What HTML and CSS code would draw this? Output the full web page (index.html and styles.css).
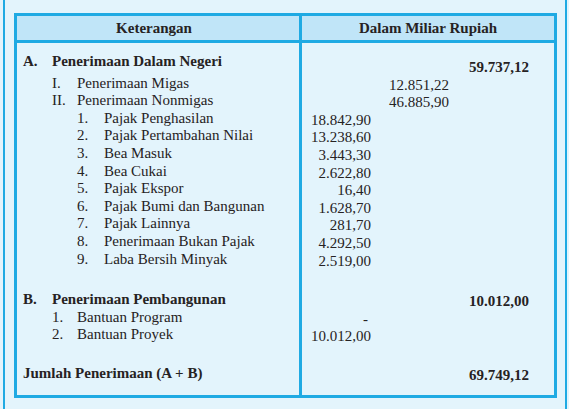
FILE: index.html
```html
<!DOCTYPE html>
<html lang="id">
<head>
<meta charset="utf-8">
<title>Penerimaan Negara</title>
<link rel="stylesheet" href="styles.css">
</head>
<body>
<div class="page">
  <table class="tbl">
    <colgroup>
      <col class="c-label">
      <col class="c-n1">
      <col class="c-n2">
      <col class="c-n3">
      <col class="c-pad">
    </colgroup>
    <thead>
      <tr>
        <th class="h-label">Keterangan</th>
        <th class="h-num" colspan="4">Dalam Miliar Rupiah</th>
      </tr>
    </thead>
    <tbody>
      <tr class="r-first">
        <td class="lab"><div class="item l0 b"><span>A.</span><span>Penerimaan Dalam Negeri</span></div></td>
        <td class="n"></td><td class="n"></td><td class="n b">59.737,12</td><td></td>
      </tr>
      <tr>
        <td class="lab"><div class="item l1"><span>I.</span><span>Penerimaan Migas</span></div></td>
        <td class="n"></td><td class="n">12.851,22</td><td class="n"></td><td></td>
      </tr>
      <tr>
        <td class="lab"><div class="item l1"><span>II.</span><span>Penerimaan Nonmigas</span></div></td>
        <td class="n"></td><td class="n">46.885,90</td><td class="n"></td><td></td>
      </tr>
      <tr>
        <td class="lab"><div class="item l2"><span>1.</span><span>Pajak Penghasilan</span></div></td>
        <td class="n">18.842,90</td><td class="n"></td><td class="n"></td><td></td>
      </tr>
      <tr>
        <td class="lab"><div class="item l2"><span>2.</span><span>Pajak Pertambahan Nilai</span></div></td>
        <td class="n">13.238,60</td><td class="n"></td><td class="n"></td><td></td>
      </tr>
      <tr>
        <td class="lab"><div class="item l2"><span>3.</span><span>Bea Masuk</span></div></td>
        <td class="n">3.443,30</td><td class="n"></td><td class="n"></td><td></td>
      </tr>
      <tr>
        <td class="lab"><div class="item l2"><span>4.</span><span>Bea Cukai</span></div></td>
        <td class="n">2.622,80</td><td class="n"></td><td class="n"></td><td></td>
      </tr>
      <tr>
        <td class="lab"><div class="item l2"><span>5.</span><span>Pajak Ekspor</span></div></td>
        <td class="n">16,40</td><td class="n"></td><td class="n"></td><td></td>
      </tr>
      <tr>
        <td class="lab"><div class="item l2"><span>6.</span><span>Pajak Bumi dan Bangunan</span></div></td>
        <td class="n">1.628,70</td><td class="n"></td><td class="n"></td><td></td>
      </tr>
      <tr>
        <td class="lab"><div class="item l2"><span>7.</span><span>Pajak Lainnya</span></div></td>
        <td class="n">281,70</td><td class="n"></td><td class="n"></td><td></td>
      </tr>
      <tr>
        <td class="lab"><div class="item l2"><span>8.</span><span>Penerimaan Bukan Pajak</span></div></td>
        <td class="n">4.292,50</td><td class="n"></td><td class="n"></td><td></td>
      </tr>
      <tr>
        <td class="lab"><div class="item l2"><span>9.</span><span>Laba Bersih Minyak</span></div></td>
        <td class="n">2.519,00</td><td class="n"></td><td class="n"></td><td></td>
      </tr>
      <tr class="r-gap1">
        <td class="lab"></td><td></td><td></td><td></td><td></td>
      </tr>
      <tr>
        <td class="lab"><div class="item l0 b"><span>B.</span><span>Penerimaan Pembangunan</span></div></td>
        <td class="n"></td><td class="n"></td><td class="n b">10.012,00</td><td></td>
      </tr>
      <tr>
        <td class="lab"><div class="item l1"><span>1.</span><span>Bantuan Program</span></div></td>
        <td class="n dash">-</td><td class="n"></td><td class="n"></td><td></td>
      </tr>
      <tr>
        <td class="lab"><div class="item l1"><span>2.</span><span>Bantuan Proyek</span></div></td>
        <td class="n">10.012,00</td><td class="n"></td><td class="n"></td><td></td>
      </tr>
      <tr class="r-gap2">
        <td class="lab"></td><td></td><td></td><td></td><td></td>
      </tr>
      <tr class="r-last">
        <td class="lab"><div class="item total b"><span>Jumlah Penerimaan (A + B)</span></div></td>
        <td class="n"></td><td class="n"></td><td class="n b">69.749,12</td><td></td>
      </tr>
    </tbody>
  </table>
</div>
</body>
</html>
```

FILE: styles.css
```css
html, body {
  margin: 0;
  padding: 0;
  background: #e3f4fc;
}

body {
  font-family: "Liberation Serif", "Times New Roman", serif;
  font-size: 15px;
  color: #262223;
}

.page {
  box-sizing: border-box;
  height: 409px;
  margin: 0 2px 0 3px;
  border-left: 2px solid #1faae3;
  border-right: 2px solid #1faae3;
  padding: 13px 8px 0 9px;
}

.tbl {
  width: 543px;
  table-layout: fixed;
  border-collapse: separate;
  border-spacing: 0;
  border: 3px solid #1faae3;
}

.c-label { width: 285px; }
.c-n1 { width: 69px; }
.c-n2 { width: 78px; }
.c-n3 { width: 80px; }
.c-pad { width: 25px; }

th {
  background: #c0e5f8;
  padding: 0;
  font-weight: bold;
  text-align: center;
  line-height: 24px;
  border-bottom: 3px solid #1faae3;
}

.h-label {
  border-right: 3px solid #1faae3;
  padding-right: 8px;
}

td {
  padding: 0;
  vertical-align: top;
  line-height: 17.6px;
}

td.lab {
  border-right: 3px solid #1faae3;
}

td.n {
  text-align: right;
  padding-top: 4px;
  line-height: 13.6px;
  white-space: nowrap;
}

.b { font-weight: bold; }

.item {
  display: grid;
  white-space: nowrap;
}

.l0 {
  padding-left: 6px;
  grid-template-columns: 29px 1fr;
}

.l1 {
  padding-left: 35px;
  grid-template-columns: 25px 1fr;
}

.l2 {
  padding-left: 60px;
  grid-template-columns: 27px 1fr;
}

.total {
  padding-left: 6px;
}

.r-first td.lab {
  padding-top: 10px;
  padding-bottom: 4px;
}

.r-first td.n {
  padding-top: 18px;
}

.r-gap1 { height: 23px; }
.r-gap2 { height: 21px; }
.r-last { height: 30px; }

td.dash {
  padding-right: 3px;
}
```
